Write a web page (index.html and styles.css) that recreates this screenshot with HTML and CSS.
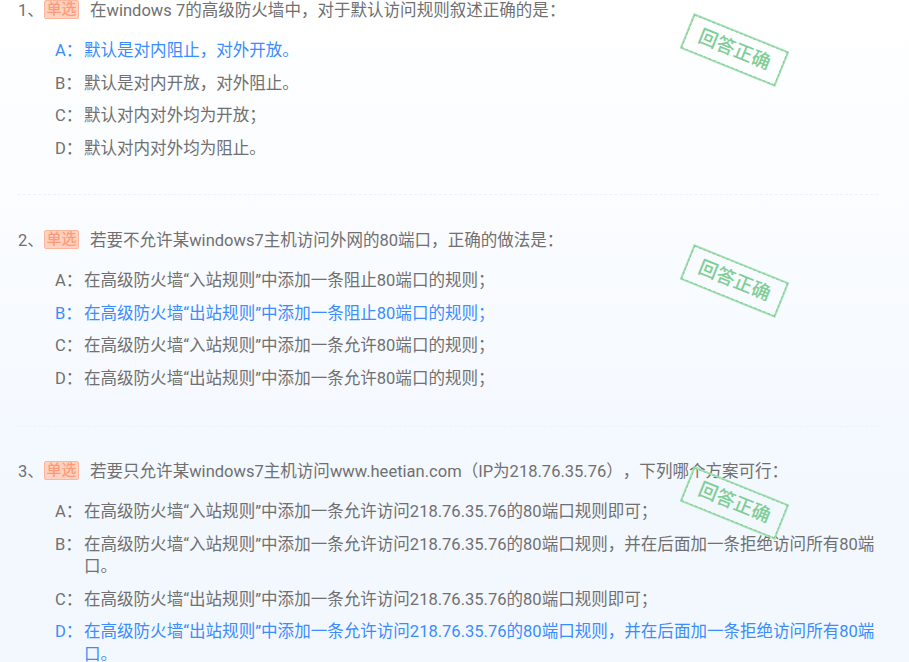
FILE: index.html
```html
<!DOCTYPE html>
<html lang="zh-CN">
<head>
<meta charset="utf-8">
<title>题目</title>
<link rel="stylesheet" href="styles.css">
</head>
<body>
<main class="quiz">
  <section class="question first">
    <div class="title"><span class="num">1、</span><span class="badge">单选</span><span class="stem">在windows 7的高级防火墙中，对于默认访问规则叙述正确的是：</span></div>
    <ul class="options">
      <li class="opt right"><span class="key">A：</span><span>默认是对内阻止，对外开放。</span></li>
      <li class="opt"><span class="key">B：</span><span>默认是对内开放，对外阻止。</span></li>
      <li class="opt"><span class="key">C：</span><span>默认对内对外均为开放；</span></li>
      <li class="opt"><span class="key">D：</span><span>默认对内对外均为阻止。</span></li>
    </ul>
    <div class="stamp s1"><span>回答正确</span></div>
  </section>
  <section class="question second">
    <div class="title"><span class="num">2、</span><span class="badge">单选</span><span class="stem">若要不允许某windows7主机访问外网的80端口，正确的做法是：</span></div>
    <ul class="options">
      <li class="opt"><span class="key">A：</span><span>在高级防火墙“入站规则”中添加一条阻止80端口的规则；</span></li>
      <li class="opt right"><span class="key">B：</span><span>在高级防火墙“出站规则”中添加一条阻止80端口的规则；</span></li>
      <li class="opt"><span class="key">C：</span><span>在高级防火墙“入站规则”中添加一条允许80端口的规则；</span></li>
      <li class="opt"><span class="key">D：</span><span>在高级防火墙“出站规则”中添加一条允许80端口的规则；</span></li>
    </ul>
    <div class="stamp s2"><span>回答正确</span></div>
  </section>
  <section class="question third">
    <div class="title"><span class="num">3、</span><span class="badge">单选</span><span class="stem">若要只允许某windows7主机访问www.heetian.com（IP为218.76.35.76），下列哪个方案可行：</span></div>
    <ul class="options">
      <li class="opt"><span class="key">A：</span><span>在高级防火墙“入站规则”中添加一条允许访问218.76.35.76的80端口规则即可；</span></li>
      <li class="opt"><span class="key">B：</span><span>在高级防火墙“入站规则”中添加一条允许访问218.76.35.76的80端口规则，并在后面加一条拒绝访问所有80端口。</span></li>
      <li class="opt"><span class="key">C：</span><span>在高级防火墙“出站规则”中添加一条允许访问218.76.35.76的80端口规则即可；</span></li>
      <li class="opt right"><span class="key">D：</span><span>在高级防火墙“出站规则”中添加一条允许访问218.76.35.76的80端口规则，并在后面加一条拒绝访问所有80端口。</span></li>
    </ul>
    <div class="stamp s3"><span>回答正确</span></div>
  </section>
</main>
</body>
</html>
```
FILE: styles.css
```css
* { box-sizing: border-box; }
html, body { margin: 0; height: 662px; overflow: hidden; }
body {
  background: linear-gradient(180deg, #ffffff 0%, #f3f8ff 75%, #f3f8ff 100%);
  font-family: Roboto, "Noto Sans CJK SC", sans-serif;
  font-size: 16.55px;
  color: #707070;
  text-spacing-trim: space-all;
}
.quiz { padding-left: 18px; width: 878px; }
.question { position: relative; border-bottom: 1px dashed #eef1f5; }
.question.third { border-bottom: 0; }
.first { height: 197px; margin-top: -2px; }
.second { height: 232px; padding-top: 33px; }
.third { padding-top: 32px; }
.title { display: flex; align-items: center; height: 22px; }
.num { width: 26px; }
.badge {
  width: 35px;
  height: 19px;
  margin-right: 11px;
  background: #ffd2c2;
  border: 1px solid #ffb59b;
  border-radius: 2px;
  color: #ff9a78;
  font-size: 15px;
  font-weight: 500;
  line-height: 17px;
  text-align: center;
}
.options { list-style: none; margin: 20px 0 0; padding: 0 0 0 37px; }
.opt { display: flex; line-height: 22.5px; margin-bottom: 10px; }
.key { flex: none; width: 29px; }
.right { color: #3a8cff; }
.stamp {
  position: absolute;
  left: 665px;
  width: 103px;
  height: 38px;
  border: 2px solid #a8e0b6;
  outline: 1px dashed rgba(110, 200, 135, .7);
  outline-offset: -2px;
  transform: rotate(22deg);
  color: #7fce95;
  font-size: 19px;
  font-weight: 500;
  line-height: 34px;
  text-align: center;
  white-space: nowrap;
}
.s1 { top: 33px; }
.s2 { top: 67px; }
.s3 { top: 57px; }
```
